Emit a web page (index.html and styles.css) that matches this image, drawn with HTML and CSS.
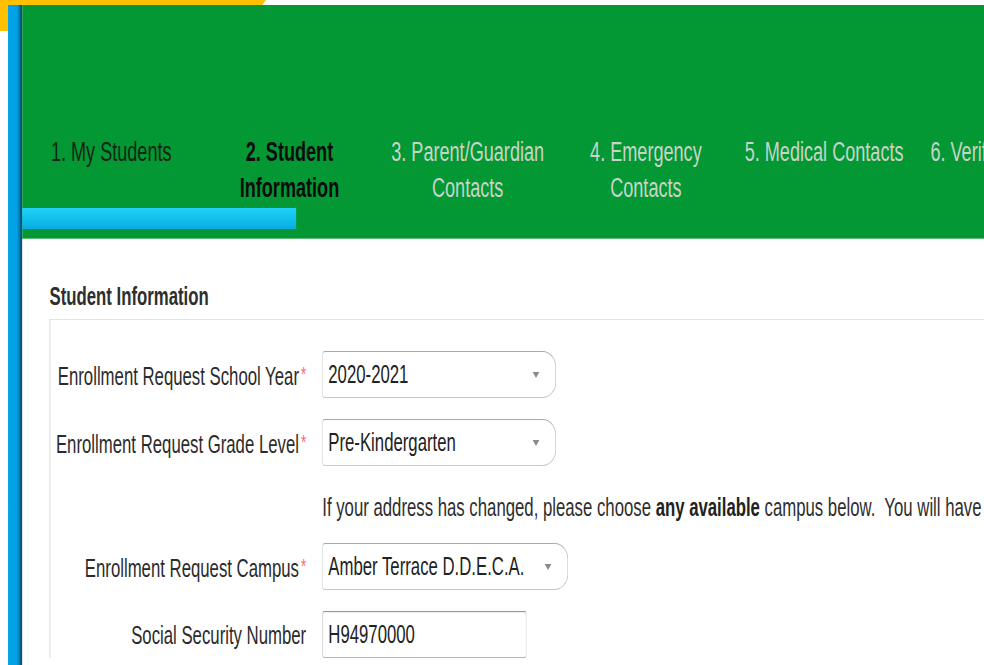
FILE: index.html
```html
<!DOCTYPE html>
<html lang="en">
<head>
<meta charset="utf-8">
<title>Student Enrollment</title>
<link rel="stylesheet" href="styles.css">
</head>
<body>
<div class="screen">
  <div class="accent"></div>
  <div class="frame">
    <div class="rail">
      <div class="rail-gold"></div>
      <div class="rail-blue"></div>
    </div>
    <main class="main">
      <header class="steps">
        <nav class="tabs">
          <div class="tab done">1. My Students</div>
          <div class="tab current">2. Student Information</div>
          <div class="tab">3. Parent/Guardian Contacts</div>
          <div class="tab">4. Emergency Contacts</div>
          <div class="tab">5. Medical Contacts</div>
          <div class="tab">6. Verify &amp; Submit</div>
        </nav>
        <div class="progress"></div>
      </header>
      <section class="content">
        <h2 class="section-title">Student Information</h2>
        <div class="panel">
          <label class="field-label">Enrollment Request School Year<span class="req">*</span></label>
          <div class="select wide"><span class="select-value">2020-2021</span><span class="caret"></span></div>

          <label class="field-label">Enrollment Request Grade Level<span class="req">*</span></label>
          <div class="select wide"><span class="select-value">Pre-Kindergarten</span><span class="caret"></span></div>

          <p class="help">If your address has changed, please choose <b>any available</b> campus below.&nbsp; You will have to provide proof of residency at the campus.</p>

          <label class="field-label">Enrollment Request Campus<span class="req">*</span></label>
          <div class="select campus"><span class="select-value">Amber Terrace D.D.E.C.A.</span><span class="caret"></span></div>

          <label class="field-label">Social Security Number</label>
          <input class="text-input" type="text" value="H94970000">
        </div>
      </section>
    </main>
  </div>
</div>
</body>
</html>
```

FILE: styles.css
```css
* {
  box-sizing: border-box;
}

html,
body {
  margin: 0;
  height: 100%;
  overflow: hidden;
  background: #fff;
}

body {
  font-family: "Liberation Sans", Arial, Helvetica, sans-serif;
  color: #333;
}

/* the app is drawn with a narrowed horizontal scale */
.screen {
  width: 1469px;
  height: 665px;
  display: flex;
  flex-direction: column;
  transform: scaleX(0.67);
  transform-origin: 0 0;
  overflow: hidden;
}

.accent {
  flex-shrink: 0;
  width: 397px;
  height: 5px;
  background: #ffc000;
  clip-path: polygon(0 0, 100% 0, 98.6% 100%, 0 100%);
}

.frame {
  flex: 1;
  display: flex;
  min-height: 0;
}

.rail {
  flex-shrink: 0;
  width: 33px;
  display: flex;
}

.rail-gold {
  width: 12px;
  height: 26px;
  background: #ffc000;
}

.rail-blue {
  flex: 1;
  background: linear-gradient(to right, #00a3e9 0, #01a1e6 62%, #0880b8 78%, #0b5a85 90%, #0c4565 100%);
}

.main {
  flex: 1;
  min-width: 0;
  display: flex;
  flex-direction: column;
  overflow: hidden;
}

/* step header */
.steps {
  flex-shrink: 0;
  height: 234px;
  padding-top: 129px;
  background: #049834;
  border-bottom: 1px solid #5dbd78;
}

.tabs {
  display: flex;
  height: 72px;
}

.tab {
  flex: 0 0 266px;
  padding: 0 12px;
  text-align: center;
  font-size: 27px;
  line-height: 36px;
  color: #c9d4c9;
}

.tab.done {
  color: #132616;
}

.tab.current {
  color: #0b0b0b;
  font-weight: 700;
}

.progress {
  margin-top: 2px;
  width: 409px;
  height: 21px;
  background: linear-gradient(to bottom, #22d2f7 0, #14c2ef 45%, #0aacdf 100%);
}

/* form body */
.content {
  flex: 1;
  padding: 42px 0 0 40px;
  border-left: 1px solid #d8dee2;
}

.section-title {
  margin: 0 0 8px;
  font-size: 25px;
  line-height: 30px;
  font-weight: 700;
  color: #2e2e2e;
  white-space: nowrap;
}

.panel {
  display: grid;
  grid-template-columns: 382px auto;
  column-gap: 24px;
  row-gap: 21px;
  align-items: center;
  justify-items: start;
  padding-top: 31px;
  border-top: 1px solid #e4e4e4;
  border-left: 1px solid #c8c8c8;
}

.field-label {
  justify-self: end;
  font-size: 25px;
  line-height: 30px;
  color: #2b2b2b;
  white-space: nowrap;
}

.req {
  margin-left: 3px;
  font-size: 20px;
  vertical-align: 4px;
  color: #f26b6b;
}

.help {
  grid-column: 2;
  margin: 0;
  padding-top: 5px;
  font-size: 25px;
  line-height: 30px;
  color: #2e2e2e;
  white-space: nowrap;
}

.help b {
  color: #222;
}

.select {
  display: flex;
  align-items: center;
  height: 47px;
  padding-left: 8px;
  background: #fff;
  border: 1px solid;
  border-color: #a9a9a9 #bcbcbc #cacaca #b2b2b2;
  border-radius: 4px 20px 20px 4px / 4px 16px 16px 4px;
  font-size: 25px;
  color: #222;
  white-space: nowrap;
}

.select.wide {
  width: 349px;
}

.select.campus {
  width: 367px;
}

.caret {
  flex-shrink: 0;
  margin-left: auto;
  margin-right: 24px;
  width: 0;
  height: 0;
  border-left: 5px solid transparent;
  border-right: 5px solid transparent;
  border-top: 6px solid #8a8a8a;
}

.text-input {
  width: 305px;
  height: 47px;
  padding: 0 8px;
  border: 1px solid;
  border-color: #8e9aa3 #a6adb2 #b3b8bb #9aa4ab;
  border-radius: 3px;
  box-shadow: inset 0 1px 2px rgba(0, 0, 0, 0.08);
  font-family: inherit;
  font-size: 25px;
  color: #222;
  background: #fff;
  outline: none;
}
```
